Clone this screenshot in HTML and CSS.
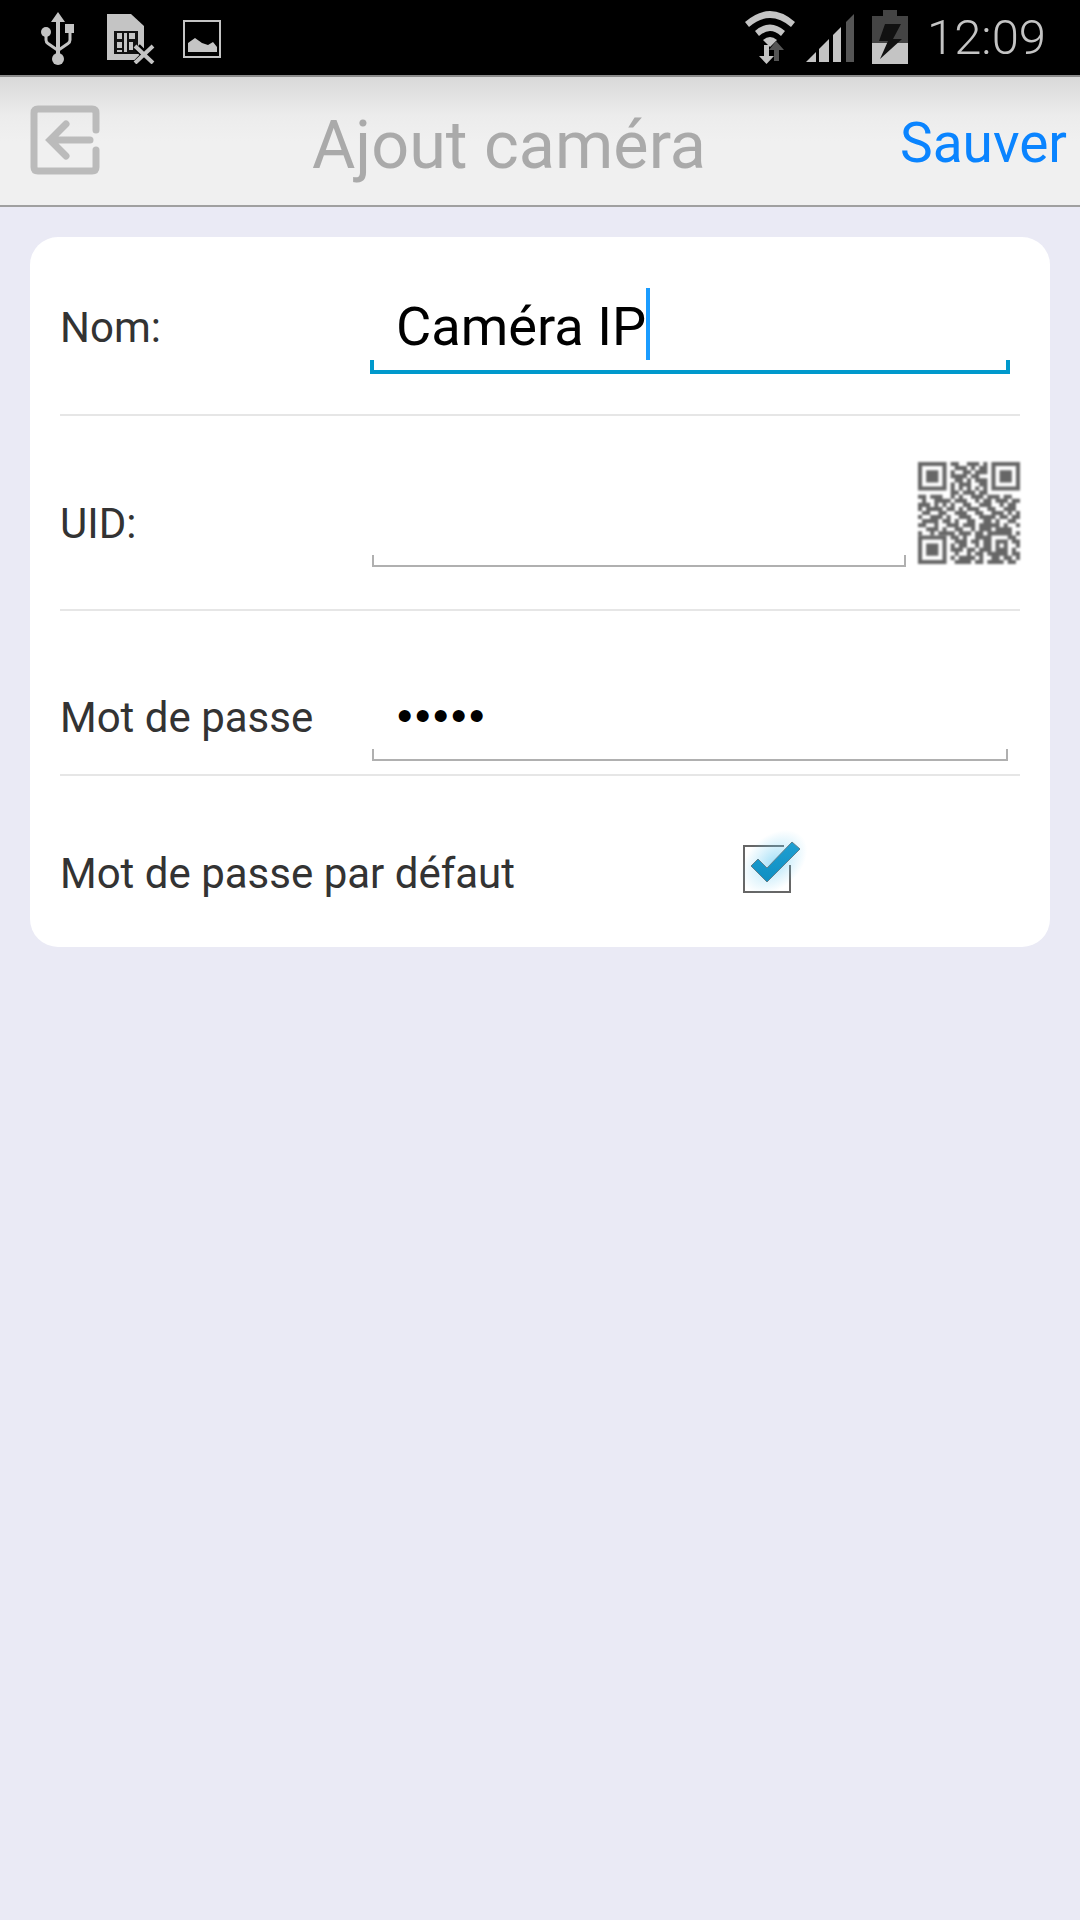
FILE: index.html
```html
<!DOCTYPE html>
<html lang="fr">
<head>
  <meta charset="UTF-8">
  <meta name="viewport" content="width=device-width, initial-scale=1.0">
  <title>Ajout caméra</title>
  <link rel="stylesheet" href="styles.css">
</head>
<body>
  <div class="statusbar">
    <div class="status-left">
      <svg class="ic-usb" width="36" height="54" viewBox="0 0 36 54">
        <path d="M18 0l7 10h-5v34h-4V10h-5z" fill="#c4c4c4"/>
        <circle cx="18" cy="47" r="6" fill="#c4c4c4"/>
        <circle cx="6" cy="20" r="5" fill="#c4c4c4"/>
        <rect x="25" y="12" width="9" height="9" fill="#c4c4c4"/>
        <path d="M6 22v6q0 2 2 3.500l10 7 10-7q2-1.500 2-3.500v-9" fill="none" stroke="#c4c4c4" stroke-width="3"/>
      </svg>
      <svg class="ic-sim" width="48" height="50" viewBox="0 0 48 50">
        <path d="M0 0h24l13 12v34H0z" fill="#c4c4c4"/>
        <path d="M7 17h24v23H7z" fill="#111"/>
        <path d="M10 19h5v6h-5zM10 28h5v6h-5zM17 19h3v19h-3zM22 19h6v6h-6zM22 28h4v8h-4zM10 36h5v2h-5z" fill="#c4c4c4"/>
        <path d="M30 33l16 16M46 33L30 49" stroke="#000" stroke-width="8"/>
        <path d="M28 32l18 17M46 32L28 49" stroke="#c4c4c4" stroke-width="4"/>
      </svg>
      <svg class="ic-pic" width="38" height="38" viewBox="0 0 38 38">
        <rect x="1" y="1" width="36" height="36" fill="none" stroke="#c4c4c4" stroke-width="2"/>
        <path d="M5 32V23l7-5 7 5 6 2 5-3 4 5v5z" fill="#c4c4c4"/>
      </svg>
    </div>
    <div class="status-right">
      <svg class="ic-wifi" width="50" height="54" viewBox="0 0 50 54">
        <path d="M0 11Q25-11 50 11l-4 5Q25-2 4 16z" fill="#c4c4c4"/>
        <path d="M10 20Q25 7 40 20l-4 5Q25 15 14 25z" fill="#c4c4c4"/>
        <path d="M18 29Q25 23 32 29l-7 7z" fill="#c4c4c4"/>
        <path d="M19 34h5v11h5l-7.500 8L14 45h5z" fill="#c4c4c4"/>
        <path d="M31 30l8 9h-5v11h-5V39h-5z" fill="#555"/>
      </svg>
      <svg class="ic-signal" width="48" height="48" viewBox="0 0 48 48">
        <path d="M0 48L10 38v10z" fill="#c4c4c4"/>
        <path d="M13 35l10-10v23H13z" fill="#c4c4c4"/>
        <path d="M27 21l8-8v35h-8z" fill="#c4c4c4"/>
        <path d="M40 8l8-8v48h-8z" fill="#555"/>
      </svg>
      <svg class="ic-batt" width="36" height="54" viewBox="0 0 36 54">
        <path d="M11 0h14v6h11v27H0V6h11z" fill="#444"/>
        <rect y="33" width="36" height="21" fill="#c4c4c4"/>
        <path d="M13 14h16l-8 15h9L8 49l8-18H7z" fill="#111"/>
      </svg>
      <span class="clock">12:09</span>
    </div>
  </div>

  <div class="topbar">
    <svg class="ic-back" width="70" height="70" viewBox="0 0 70 70">
      <path d="M66 25V8q0-4-4-4H8Q4 4 4 8v54q0 4 4 4h54q4 0 4-4V45" fill="none" stroke="#bbb" stroke-width="7" stroke-linecap="round"/>
      <path d="M60 35H21M36 19L20 35 36 51" fill="none" stroke="#bbb" stroke-width="7" stroke-linecap="round"/>
    </svg>
    <div class="title">Ajout caméra</div>
    <div class="save">Sauver</div>
  </div>

  <div class="card">
    <div class="row row-name">
      <div class="label label-name">Nom:</div>
      <div class="field field-active">
        <span class="value">Caméra IP</span><span class="caret"></span>
      </div>
    </div>
    <div class="row row-uid">
      <div class="label">UID:</div>
      <div class="field field-uid"></div>
      <svg class="qr" width="102" height="102" viewBox="0 0 25 25">
        <path d="M0 0h7v7H0zM1 1v5h5V1zM2 2h3v3H2zM18 0h7v7h-7zM19 1v5h5V1zM20 2h3v3h-3zM0 18h7v7H0zM1 19v5h5v-5zM2 20h3v3H2z" fill="#666" fill-rule="evenodd"/>
        <path d="M8 .5h2M12 .5h3M16 .5h1M9 1.500h3M13 1.500h1M15 1.500h2M8 2.500h1M11 2.500h2M14 2.500h3M8 3.500h4M13 3.500h2M9 4.500h2M12 4.500h1M14 4.500h3M8 5.500h1M10 5.500h3M15 5.500h2M8 6.500h1M10 6.500h1M12 6.500h1M14 6.500h1M16 6.500h1M8 7.500h2M11 7.500h3M15 7.500h2M0 8.500h2M3 8.500h3M8 8.500h1M10 8.500h1M13 8.500h3M17 8.500h3M21 8.500h2M1 9.500h1M4 9.500h4M9 9.500h3M14 9.500h1M16 9.500h2M19 9.500h3M23 9.500h2M0 10.500h3M4 10.500h1M6 10.500h1M8 10.500h1M11 10.500h2M15 10.500h3M20 10.500h1M22 10.500h2M0 11.500h1M2 11.500h4M7 11.500h2M10 11.500h1M12 11.500h3M17 11.500h2M21 11.500h3M1 12.500h2M5 12.500h2M9 12.500h3M14 12.500h2M18 12.500h3M22 12.500h1M24 12.500h1M0 13.500h1M3 13.500h3M7 13.500h1M10 13.500h3M15 13.500h4M20 13.500h2M23 13.500h2M1 14.500h4M6 14.500h2M9 14.500h1M12 14.500h2M16 14.500h2M19 14.500h1M22 14.500h2M0 15.500h2M4 15.500h1M7 15.500h3M11 15.500h3M15 15.500h5M21 15.500h1M24 15.500h1M2 16.500h3M6 16.500h1M9 16.500h2M13 16.500h1M15 16.500h3M19 16.500h4M0 17.500h1M3 17.500h1M5 17.500h4M10 17.500h3M14 17.500h2M17 17.500h6M24 17.500h1M8 18.500h2M11 18.500h1M14 18.500h3M17 18.500h1M22 18.500h2M9 19.500h3M13 19.500h2M16 19.500h2M19 19.500h3M23 19.500h2M8 20.500h1M10 20.500h2M14 20.500h1M16 20.500h2M19 20.500h1M21 20.500h1M24 20.500h1M8 21.500h3M12 21.500h2M15 21.500h3M19 21.500h3M23 21.500h1M9 22.500h1M12 22.500h1M14 22.500h2M17 22.500h5M23 22.500h2M8 23.500h1M10 23.500h4M15 23.500h1M18 23.500h2M21 23.500h2M24 23.500h1M9 24.500h4M14 24.500h2M17 24.500h4M22 24.500h2" stroke="#666" fill="none"/>
      </svg>
    </div>
    <div class="row row-pass">
      <div class="label">Mot de passe</div>
      <div class="field field-pass"><span class="dots">•••••</span></div>
    </div>
    <div class="row row-default">
      <div class="label label-default">Mot de passe par défaut</div>
      <svg class="check" width="100" height="100" viewBox="0 0 100 100">
        <defs>
          <radialGradient id="glow">
            <stop offset="0" stop-color="#6fcdf3" stop-opacity=".6"/>
            <stop offset=".6" stop-color="#6fcdf3" stop-opacity=".22"/>
            <stop offset="1" stop-color="#6fcdf3" stop-opacity="0"/>
          </radialGradient>
          <linearGradient id="tick" x1="0" y1="0" x2="0" y2="1">
            <stop offset="0" stop-color="#1f9fd2"/>
            <stop offset="1" stop-color="#0f8fc2"/>
          </linearGradient>
        </defs>
        <path d="M64 26H24v46h46V45" fill="none" stroke="#666" stroke-width="2"/>
        <ellipse cx="54" cy="42" rx="38" ry="26" transform="rotate(-42 54 42)" fill="url(#glow)"/>
        <path d="M31 46l7-7 9 9 25-26 8 7-33 33z" fill="url(#tick)" stroke="#5f7f8c" stroke-width="1"/>
      </svg>
    </div>
  </div>
</body>
</html>
```

FILE: styles.css
```css
* {
  box-sizing: border-box;
}
body {
  margin: 0;
  width: 1080px;
  height: 1920px;
  overflow: hidden;
  background-color: #eaeaf5;
  font-family: Roboto, sans-serif;
}
.statusbar {
  height: 75px;
  background: #000;
  display: flex;
  justify-content: space-between;
  align-items: flex-start;
}
.status-left {
  display: flex;
  align-items: flex-start;
  padding-left: 40px;
}
.ic-usb {
  margin-top: 12px;
}
.ic-sim {
  margin-top: 14px;
  margin-left: 31px;
}
.ic-pic {
  margin-top: 20px;
  margin-left: 28px;
}
.status-right {
  display: flex;
  align-items: flex-start;
  padding-right: 34px;
}
.ic-wifi {
  margin-top: 11px;
}
.ic-signal {
  margin-top: 14px;
  margin-left: 11px;
}
.ic-batt {
  margin-top: 10px;
  margin-left: 18px;
}
.clock {
  margin-left: 19px;
  font-weight: 300;
  font-size: 49px;
  line-height: 75px;
  color: #c4c4c4;
}
.topbar {
  height: 132px;
  padding: 0 13px 0 30px;
  display: flex;
  align-items: center;
  background: linear-gradient(#d9d9d9, #ececec 30%, #f0f0f0 50%);
  border-top: 2px solid #8a8a8a;
  border-bottom: 2px solid #a0a0a0;
}
.ic-back {
  margin-bottom: 2px;
}
.title {
  flex: 1;
  padding-top: 7px;
  padding-left: 18px;
  text-align: center;
  font-size: 66.5px;
  color: #aaa;
}
.save {
  padding-top: 4px;
  font-size: 55px;
  color: #0a84ff;
}
.card {
  margin: 30px 30px 0;
  height: 710px;
  padding: 0 30px;
  background: #fff;
  border-radius: 28px;
}
.row {
  display: flex;
  align-items: flex-end;
  border-bottom: 2px solid #e6e6e6;
}
.row-name {
  height: 179px;
  padding-bottom: 40px;
}
.row-uid {
  height: 195px;
  padding-bottom: 42px;
}
.row-pass {
  height: 165px;
  padding-bottom: 13px;
}
.row-default {
  height: 170px;
  padding-top: 18px;
  align-items: center;
  border-bottom: 0;
}
.label {
  width: 310px;
  margin-bottom: 19px;
  font-size: 42px;
  color: #333;
}
.label-name {
  margin-bottom: 22px;
}
.label-default {
  width: 660px;
  margin-top: 6px;
  margin-bottom: 0;
}
.field {
  position: relative;
  height: 62px;
  border-bottom: 2px solid #b0b0b0;
}
.field::before,
.field::after {
  content: "";
  position: absolute;
  bottom: 0;
  width: 2px;
  height: 10px;
  background: #b0b0b0;
}
.field::before {
  left: 0;
}
.field::after {
  right: 0;
}
.field-active {
  width: 640px;
  height: 86px;
  display: flex;
  padding-left: 26px;
  border-bottom: 4px solid #0099cc;
}
.field-active::before,
.field-active::after {
  width: 4px;
  height: 10px;
  background: #0099cc;
}
.value {
  padding-top: 6px;
  font-size: 54.2px;
  line-height: 66px;
  color: #000;
}
.caret {
  width: 4px;
  height: 72px;
  background: #1a9cff;
}
.field-uid {
  width: 534px;
  margin-left: 2px;
}
.qr {
  margin-left: 12px;
  margin-bottom: 3px;
  filter: blur(1.2px);
}
.field-pass {
  width: 636px;
  margin-left: 2px;
  padding-left: 25px;
}
.dots {
  display: block;
  font-family: "Liberation Sans", sans-serif;
  font-size: 44px;
  letter-spacing: 2.6px;
  line-height: 34px;
  color: #000;
}
```
